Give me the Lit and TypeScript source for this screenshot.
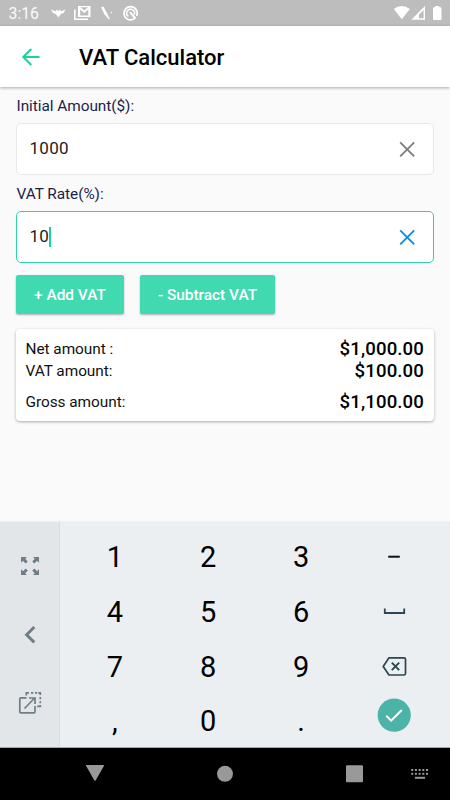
import { LitElement, html, css, svg } from "lit";
import { customElement, property } from "lit/decorators.js";

@customElement("status-bar")
class StatusBar extends LitElement {
  static styles = css`
    :host { display: flex; height: 26px; background: #bdbdbd; color: #fff; align-items: center; box-sizing: border-box; padding-left: 8.5px; }
    .time { font-size: 15.8px; line-height: 26px; width: 41.5px; padding-top: 2px; opacity: 0.95; }
    svg { display: block; flex: none; }
    .spacer { flex: 1; }
  `;
  render() {
    return html`
      <div class="time">3:16</div>
      <svg width="90" height="26" viewBox="50 0 90 26" fill="#fff">
        <path d="M51 9.6 L55.3 11.2 L57 9.4 L57.6 10.8 H58.8 L59.4 9.4 L61.2 11.2 L65.6 9.6 L63.6 13 L60.8 14 L58.3 17.6 L55.8 14 L53 13Z" />
        <path d="M74.8 9.5V19.3H88" fill="none" stroke="#fff" stroke-width="1.6" />
        <path fill-rule="evenodd" d="M78 6H90.5V17H78ZM80.2 9.6V15.6H88.3V9.6L84.25 13ZM80.4 7.3L84.25 10.6L88.1 7.3Z" />
        <path d="M101 7L103.6 6.8L109.8 18.8L108.8 19.5L104.2 14Z" />
        <circle cx="111.4" cy="12.5" r="0.7" />
        <path d="M135 18.2A6.6 6.6 0 1 1 136.6 16" fill="none" stroke="#fff" stroke-width="1.7" />
        <path d="M128.4 16.4A3.9 3.9 0 1 1 134.2 14.6" fill="none" stroke="#fff" stroke-width="1.5" />
        <path d="M130 12.2L135.6 18.6" stroke="#fff" stroke-width="2" />
      </svg>
      <div class="spacer"></div>
      <svg width="58" height="26" viewBox="392 0 58 26" fill="#fff">
        <path d="M393.8 8.9Q401.8 3 409.8 8.9L401.8 19.2Z" />
        <path fill-rule="evenodd" d="M411.3 19.8L425 6V19.8ZM419 18.3H423.6V10L419 14.6Z" />
        <path d="M435.2 6H439.2V7.2H440.5Q441.5 7.2 441.5 8.2V19Q441.5 20 440.5 20H434Q433 20 433 19V8.2Q433 7.2 434 7.2H435.2Z" />
      </svg>
    `;
  }
}

@customElement("amount-field")
class AmountField extends LitElement {
  @property() label = "";
  @property() value = "";
  @property({ type: Boolean, reflect: true }) active = false;
  static styles = css`
    :host { display: block; height: 88px; color: #1b1f4b; }
    .label { height: 35px; box-sizing: border-box; padding-top: 1px; line-height: 35px; font-size: 15.4px; letter-spacing: -0.05px; padding-left: 0.5px; }
    .box { height: 52px; box-sizing: border-box; border: 1px solid #e7e7ed; border-bottom-width: 1.5px; border-radius: 5px; background: #fff; display: flex; align-items: center; padding: 0 18px 0 12.5px; color: #1c1c1c; font-size: 17px; letter-spacing: 0.3px; }
    :host([active]) .box { border-color: #2fd3a5; }
    .value { padding-bottom: 2px; line-height: 22px; }
    .caret { width: 2px; height: 20px; background: #17d3a0; margin-bottom: 1px; }
    .clear { margin-left: auto; display: block; stroke: #7d7d7d; }
    :host([active]) .clear { stroke: #098be6; }
  `;
  render() {
    return html`
      <div class="label">${this.label}</div>
      <div class="box">
        <span class="value">${this.value}</span>
        ${this.active ? html`<span class="caret"></span>` : ""}
        <svg class="clear" width="16" height="16" viewBox="0 0 16 16" stroke-width="1.8"><path d="M1.2 1.4L15.2 15.4M15.2 1.4L1.2 15.4" /></svg>
      </div>
    `;
  }
}

const keyIcons: Record<string, unknown> = {
  minus: svg`<path d="M14.2 20.7H25.8" stroke="#111" stroke-width="2" />`,
  space: svg`<path d="M10.8 17.4V22H30.2V17.4" stroke="#2a4652" stroke-width="1.8" />`,
  erase: svg`<path d="M15 11.8H29.9Q31.5 11.8 31.5 13.3V27.5Q31.5 29 29.9 29H15L9.2 20.4Z" stroke="#2a4652" stroke-width="1.7" stroke-linejoin="round" /><path d="M17.8 16.7L25.2 24.1M25.2 16.7L17.8 24.1" stroke="#2a4652" stroke-width="1.9" />`,
  done: svg`<circle cx="20.2" cy="14.2" r="16.6" fill="#4bb3a7" /><path d="M12.3 14.8L17.1 19.6L27.8 9" stroke="#fff" stroke-width="2" />`,
};

@customElement("number-pad")
class NumberPad extends LitElement {
  static styles = css`
    :host { display: flex; height: 225px; background: #ebeff2; }
    .tools { width: 60px; box-sizing: border-box; background: #e2e6e9; border-right: 1px solid #d9dee1; flex: none; }
    .tools svg, .key svg { display: block; overflow: visible; }
    .keys { display: grid; grid-template-columns: repeat(4, 93.1px); grid-template-rows: repeat(4, 54.8px); padding: 7px 0 0 8.4px; }
    .key { display: flex; align-items: center; justify-content: center; color: #000; font-size: 29px; line-height: 54px; }
    .digit { padding-top: 1px; }
  `;
  render() {
    const keys = ["1", "2", "3", "minus", "4", "5", "6", "space", "7", "8", "9", "erase", ",", "0", ".", "done"];
    return html`
      <div class="tools">
        <svg width="59" height="225" viewBox="0 522 59 225" fill="#6f7e86">
          <path d="M21 557H27L25.2 558.8L27.8 561.4L25.6 563.4L23 560.8L21 562.8Z" />
          <path d="M39 557H33L34.8 558.8L32.2 561.4L34.4 563.4L37 560.8L39 562.8Z" />
          <path d="M21 575H27L25.2 573.2L27.8 570.6L25.6 568.6L23 571.2L21 569.2Z" />
          <path d="M39 575H33L34.8 573.2L32.2 570.6L34.4 568.6L37 571.2L39 569.2Z" />
          <path d="M34.3 627L26.6 634.7L34.3 642.4" fill="none" stroke="#6f7e86" stroke-width="2.9" />
          <g fill="none" stroke="#6f7e86" stroke-width="1.7">
            <path d="M26.5 697.8H20.8Q19.8 697.8 19.8 698.8V711.8Q19.8 712.8 20.8 712.8H34Q35 712.8 35 711.8V706" />
            <path d="M24.5 708.5L34.2 698.5M29 698H35V704" />
            <path d="M26.3 695.5V692.8H29M31 692.8H33.3M35 692.8H37.2M38.3 692.8H40.3V695M40.3 697V699.2M40.3 701.2V703.3M40.3 705V706.3H37.2" />
          </g>
        </svg>
      </div>
      <div class="keys">
        ${keys.map((k) => (k in keyIcons
          ? html`<div class="key"><svg width="40" height="40" viewBox="0 0 40 40" fill="none">${keyIcons[k]}</svg></div>`
          : html`<div class="key digit">${k}</div>`))}
      </div>
    `;
  }
}

@customElement("app-root")
class AppRoot extends LitElement {
  static styles = css`
    :host { display: flex; flex-direction: column; height: 800px; overflow: hidden; background: #fafafa; font-family: Roboto, sans-serif; }
    header { height: 61px; flex: none; background: #fff; display: flex; align-items: center; box-shadow: 0 1px 3px rgba(0, 0, 0, 0.32); padding-left: 21px; }
    header svg { display: block; margin-right: 38px; }
    h1 { margin: 0; font-size: 22px; font-weight: 500; line-height: 28px; padding-top: 2px; color: #000; }
    main { flex: 1; padding: 1px 16px 0; }
    .actions { display: flex; gap: 16px; padding-top: 10.5px; }
    button { height: 39px; border: 0; border-radius: 2px; background: #41dab0; color: #fff; font: 500 15.4px Roboto, sans-serif; padding: 1px 0 0; box-shadow: 0 1px 2px rgba(0, 0, 0, 0.3); }
    .add { width: 108px; }
    .subtract { width: 135px; }
    .card { margin-top: 15px; height: 92px; box-sizing: border-box; background: #fff; border-radius: 4px; box-shadow: 0 1px 3px rgba(0, 0, 0, 0.32); padding: 9.5px 10px 0 9.5px; }
    .row { display: flex; justify-content: space-between; align-items: center; height: 22px; font-size: 15.4px; letter-spacing: -0.04px; color: #111; }
    .row.total { margin-top: 9px; }
    .row b { font-size: 18.6px; font-weight: 500; letter-spacing: 0.12px; color: #000; }
    nav { height: 53px; flex: none; background: #000; }
    nav svg { display: block; }
    number-pad { flex: none; box-shadow: 0 0 2px rgba(0, 0, 0, 0.12); }
  `;
  render() {
    return html`
      <status-bar></status-bar>
      <header>
        <svg width="20" height="20" viewBox="0 0 20 20" fill="none" stroke="#18d3a0" stroke-width="2"><path d="M18.5 10H2.5M10.3 2L2.3 10L10.3 18" /></svg>
        <h1>VAT Calculator</h1>
      </header>
      <main>
        <amount-field label="Initial Amount($):" value="1000"></amount-field>
        <amount-field label="VAT Rate(%):" value="10" active></amount-field>
        <div class="actions">
          <button class="add">+ Add VAT</button>
          <button class="subtract">- Subtract VAT</button>
        </div>
        <div class="card">
          <div class="row"><span>Net amount :</span><b>$1,000.00</b></div>
          <div class="row"><span>VAT amount:</span><b>$100.00</b></div>
          <div class="row total"><span>Gross amount:</span><b>$1,100.00</b></div>
        </div>
      </main>
      <number-pad></number-pad>
      <nav>
        <svg width="450" height="53" viewBox="0 747 450 53" fill="#999">
          <rect x="0" y="747" width="450" height="1" fill="#a4a7a9" />
          <path d="M86.6 765H103.4Q104.4 765 104 765.8L95.6 780.4Q95 781.2 94.4 780.4L86 765.8Q85.6 765 86.6 765Z" />
          <circle cx="225" cy="773.8" r="8" />
          <rect x="346" y="765.2" width="17" height="17" rx="1" />
          ${[0, 1, 2, 3, 4].map((i) => svg`<rect x=${411.2 + i * 3.7} y="769" width="2" height="2" /><rect x=${411.2 + i * 3.7} y="772.8" width="2" height="2" />`)}
          <rect x="415" y="776.8" width="10" height="2" />
        </svg>
      </nav>
    `;
  }
}
